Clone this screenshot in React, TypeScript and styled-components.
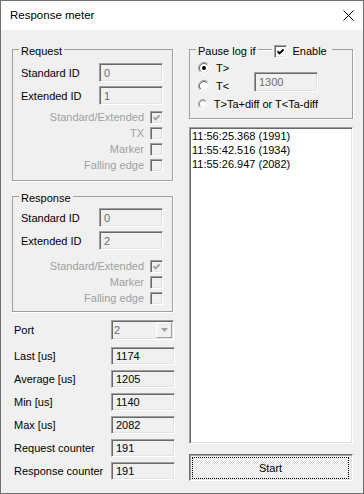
import React from 'react'
import styled, { createGlobalStyle } from 'styled-components'

const GlobalStyle = createGlobalStyle`
  html, body {
    margin: 0;
    padding: 0;
    background: #ffffff;
  }
  body {
    font-family: 'Liberation Sans', Arial, sans-serif;
    font-size: 11px;
    color: #000;
  }
  * {
    box-sizing: border-box;
  }
`

const sunken = `
  border: 1px solid;
  border-color: #a0a0a0 #ffffff #ffffff #a0a0a0;
  box-shadow: inset 1px 1px 0 #696969, inset -1px -1px 0 #e3e3e3;
`

const CheckMark = ({ color }: { color: string }) => (
  <svg width="7" height="7" viewBox="0 0 7 7">
    <path d="M0.5 3.2 L2.6 5.3 L6.5 1.3" fill="none" stroke={color} strokeWidth="1.9" />
  </svg>
)

const RadioIcon = ({ checked }: { checked?: boolean }) => (
  <svg width="12" height="12" viewBox="0 0 12 12">
    <circle cx="6" cy="6" r="5" fill="#ffffff" />
    <path d="M2.1 9.9 A5.5 5.5 0 0 1 9.9 2.1" fill="none" stroke="#a0a0a0" />
    <path d="M2.8 9.2 A4.5 4.5 0 0 1 9.2 2.8" fill="none" stroke="#696969" />
    <path d="M9.9 2.1 A5.5 5.5 0 0 1 2.1 9.9" fill="none" stroke="#ffffff" />
    <path d="M9.2 2.8 A4.5 4.5 0 0 1 2.8 9.2" fill="none" stroke="#e3e3e3" />
    {checked && <circle cx="6" cy="6" r="2" fill="#000" />}
  </svg>
)

type CheckProps = { checked?: boolean; disabled?: boolean }

const Check = ({ checked, disabled }: CheckProps) => (
  <CheckBox $disabled={disabled}>
    {checked && <CheckMark color={disabled ? '#a0a0a0' : '#000'} />}
  </CheckBox>
)

const statRows = [
  { label: 'Last [us]', value: '1174' },
  { label: 'Average [us]', value: '1205' },
  { label: 'Min [us]', value: '1140' },
  { label: 'Max [us]', value: '2082' },
  { label: 'Request counter', value: '191' },
  { label: 'Response counter', value: '191' }
]

const logLines = ['11:56:25.368 (1991)', '11:55:42.516 (1934)', '11:55:26.947 (2082)']

export default function App() {
  return (
    <>
      <GlobalStyle />
      <Window>
        <TitleBar>
          <Title>Response meter</Title>
          <svg width="11" height="11" viewBox="0 0 11 11">
            <path d="M0.5 0.5 L10.5 10.5 M10.5 0.5 L0.5 10.5" stroke="#000" strokeWidth="1" />
          </svg>
        </TitleBar>
        <Body>
          <LeftColumn>
            <GroupBox $padTop={5} $padBottom={7}>
              <Legend>Request</Legend>
              <FieldRow>
                <span>Standard ID</span>
                <TextBox $disabled>0</TextBox>
              </FieldRow>
              <FieldRow>
                <span>Extended ID</span>
                <TextBox $disabled>1</TextBox>
              </FieldRow>
              <CheckList $top={4}>
                <CheckRow>
                  Standard/Extended <Check checked disabled />
                </CheckRow>
                <CheckRow>
                  TX <Check disabled />
                </CheckRow>
                <CheckRow>
                  Marker <Check disabled />
                </CheckRow>
                <CheckRow>
                  Falling edge <Check disabled />
                </CheckRow>
              </CheckList>
            </GroupBox>

            <GroupBox $padTop={3} $padBottom={5} $marginTop={7}>
              <Legend>Response</Legend>
              <FieldRow>
                <span>Standard ID</span>
                <TextBox $disabled>0</TextBox>
              </FieldRow>
              <FieldRow>
                <span>Extended ID</span>
                <TextBox $disabled>2</TextBox>
              </FieldRow>
              <CheckList $top={8}>
                <CheckRow>
                  Standard/Extended <Check checked disabled />
                </CheckRow>
                <CheckRow>
                  Marker <Check disabled />
                </CheckRow>
                <CheckRow>
                  Falling edge <Check disabled />
                </CheckRow>
              </CheckList>
            </GroupBox>

            <StatsGrid>
              <PortRow>
                <span>Port</span>
                <Combo>
                  <span>2</span>
                  <ComboButton>
                    <svg width="7" height="4" viewBox="0 0 7 4">
                      <path d="M0 0 H7 L3.5 4 Z" fill="#a0a0a0" />
                    </svg>
                  </ComboButton>
                </Combo>
              </PortRow>
              {statRows.map(row => (
                <StatRow key={row.label}>
                  <span>{row.label}</span>
                  <TextBox>{row.value}</TextBox>
                </StatRow>
              ))}
            </StatsGrid>
          </LeftColumn>

          <RightColumn>
            <GroupBox $padTop={1} $padBottom={5} $wide>
              <Legend>
                Pause log if
                <LegendLine />
                <EnableLabel>
                  <Check checked />
                  Enable
                </EnableLabel>
              </Legend>
              <RadioGrid>
                <RadioRow>
                  <RadioIcon checked />
                  T&gt;
                </RadioRow>
                <ThresholdBox $disabled>1300</ThresholdBox>
                <RadioRow>
                  <RadioIcon />
                  T&lt;
                </RadioRow>
                <RadioRow $span>
                  <RadioIcon />
                  T&gt;Ta+diff or T&lt;Ta-diff
                </RadioRow>
              </RadioGrid>
            </GroupBox>

            <LogList>
              {logLines.map(line => (
                <LogLine key={line}>{line}</LogLine>
              ))}
            </LogList>

            <StartButton>
              <FocusRing>Start</FocusRing>
            </StartButton>
          </RightColumn>
        </Body>
      </Window>
    </>
  )
}

const Window = styled.div`
  width: 364px;
  height: 494px;
  border: 1px solid #6f6f6f;
  display: flex;
  flex-direction: column;
  background: #f0f0f0;
  overflow: hidden;
`

const TitleBar = styled.div`
  height: 29px;
  flex: none;
  background: #ffffff;
  display: flex;
  align-items: center;
  justify-content: space-between;
  padding: 0 9px 1px 9px;
`

const Title = styled.span`
  font-size: 11.5px;
  color: #000;
`

const Body = styled.div`
  flex: 1;
  display: flex;
  align-items: flex-start;
  gap: 13px;
  padding: 11px 10px 0 11px;
`

const LeftColumn = styled.div`
  width: 164px;
  display: flex;
  flex-direction: column;
`

const RightColumn = styled.div`
  width: 164px;
  display: flex;
  flex-direction: column;
`

const GroupBox = styled.fieldset<{ $padTop: number; $padBottom: number; $marginTop?: number; $wide?: boolean }>`
  margin: ${p => p.$marginTop ?? 0}px 0 0 0;
  width: ${p => (p.$wide ? 164 : 161)}px;
  min-width: 0;
  border: 1px solid #a0a0a0;
  box-shadow: 1px 1px 0 #ffffff;
  padding: ${p => p.$padTop}px ${p => (p.$wide ? 8 : 9)}px ${p => p.$padBottom}px 8px;
`

const Legend = styled.legend`
  margin-left: -2px;
  padding: 4px 2px 0;
  line-height: 13px;
  font-size: 11px;
  color: #000;
  white-space: nowrap;
`

const LegendLine = styled.span`
  display: inline-block;
  width: 14px;
  height: 1px;
  margin: 0 2px 0 3px;
  background: #a0a0a0;
  box-shadow: 0 1px 0 #ffffff;
  vertical-align: 5px;
`

const EnableLabel = styled.span`
  display: inline-flex;
  align-items: center;
  gap: 5px;
  padding-right: 3px;
  vertical-align: top;
`

const FieldRow = styled.div`
  display: grid;
  grid-template-columns: 78px 64px;
  align-items: center;
  height: 19px;
  color: #000;

  & + & {
    margin-top: 4px;
  }
`

const TextBox = styled.div<{ $disabled?: boolean }>`
  ${sunken}
  height: 100%;
  display: flex;
  align-items: center;
  padding-left: 4px;
  background: #f0f0f0;
  color: ${p => (p.$disabled ? '#6d6d6d' : '#000')};
`

const CheckList = styled.div<{ $top: number }>`
  margin-top: ${p => p.$top}px;
  display: flex;
  flex-direction: column;
`

const CheckRow = styled.div`
  height: 16px;
  display: flex;
  justify-content: flex-end;
  align-items: center;
  gap: 6px;
  color: #a0a0a0;
`

const CheckBox = styled.span<{ $disabled?: boolean }>`
  ${sunken}
  width: 13px;
  height: 13px;
  flex: none;
  display: inline-flex;
  align-items: center;
  justify-content: center;
  background: ${p => (p.$disabled ? '#f0f0f0' : '#ffffff')};
`

const StatsGrid = styled.div`
  margin-top: 8px;
  padding-left: 2px;
  display: flex;
  flex-direction: column;
  gap: 5px;
`

const PortRow = styled.div`
  display: grid;
  grid-template-columns: 97px 63px;
  align-items: center;
  height: 20px;
  margin-bottom: 2px;
`

const StatRow = styled.div`
  display: grid;
  grid-template-columns: 97px 64px;
  align-items: center;
  height: 18px;
`

const Combo = styled.div`
  ${sunken}
  height: 100%;
  display: flex;
  align-items: center;
  padding: 1px 1px 1px 2px;
  background: #f0f0f0;
  color: #6d6d6d;
`

const ComboButton = styled.span`
  margin-left: auto;
  width: 16px;
  height: 100%;
  display: flex;
  align-items: center;
  justify-content: center;
  border: 1px solid;
  border-color: #ffffff #a0a0a0 #a0a0a0 #ffffff;
  background: #f0f0f0;
`

const RadioGrid = styled.div`
  display: grid;
  grid-template-columns: 56px 64px;
  grid-auto-rows: 18px;
`

const RadioRow = styled.div<{ $span?: boolean }>`
  display: flex;
  align-items: center;
  gap: 6px;
  white-space: nowrap;
  color: #000;
  grid-column: ${p => (p.$span ? '1 / 3' : '1')};
`

const ThresholdBox = styled(TextBox)`
  grid-column: 2;
  grid-row: 1 / 3;
  align-self: end;
  height: 20px;
  margin-bottom: 3px;
`

const LogList = styled.div`
  ${sunken}
  margin-top: 8px;
  height: 317px;
  background: #ffffff;
  padding: 1px 2px;
  display: flex;
  flex-direction: column;
`

const LogLine = styled.div`
  line-height: 14px;
  color: #000;
`

const StartButton = styled.div`
  margin-top: 10px;
  height: 27px;
  display: flex;
  padding: 2px 3px 1px 2px;
  border: 1px solid;
  border-color: #6d6d6d #ffffff #ffffff #6d6d6d;
  box-shadow: inset 1px 1px 0 #a0a0a0, inset -1px -1px 0 #e3e3e3;
  background: repeating-conic-gradient(#ffffff 0 25%, #e2e2e2 0 50%) 0 0 / 2px 2px;
`

const FocusRing = styled.div`
  flex: 1;
  display: flex;
  align-items: center;
  justify-content: center;
  border: 1px dotted #000;
  color: #000;
`
